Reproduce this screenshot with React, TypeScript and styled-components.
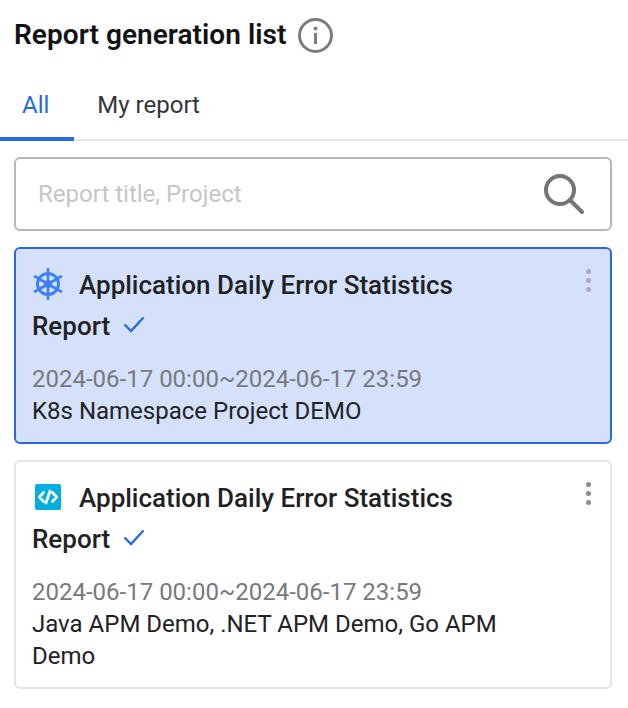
import React from 'react'
import styled, { createGlobalStyle } from 'styled-components'

const Global = createGlobalStyle`
  html, body { margin: 0; padding: 0; background: #fff; }
  body { font-family: Roboto, "Liberation Sans", sans-serif; }
`

const Page = styled.div`
  width: 628px;
  height: 708px;
  box-sizing: border-box;
  overflow: hidden;
  background: #fff;
`

const Header = styled.div`
  display: flex;
  align-items: center;
  gap: 11px;
  height: 70px;
  padding: 0 14px 2px;
  box-sizing: border-box;
`

const Title = styled.h1`
  margin: 0;
  font-size: 28px;
  font-weight: 600;
  letter-spacing: 0.05px;
  color: #111214;
`

const Info = styled.svg`
  width: 35px;
  height: 35px;
  margin-top: 2px;
`

const Tabs = styled.div`
  display: flex;
  height: 71px;
  box-sizing: border-box;
  border-bottom: 2px solid #e4e6e9;
`

const Tab = styled.div<{ $active?: boolean }>`
  display: flex;
  align-items: center;
  box-sizing: border-box;
  height: 71px;
  margin-bottom: -2px;
  padding: 3px 24px 0 ${({ $active }) => ($active ? '22px' : '23px')};
  padding-right: ${({ $active }) => ($active ? '25px' : '24px')};
  font-size: 24px;
  color: ${({ $active }) => ($active ? '#2a6ae0' : '#33363a')};
  border-bottom: 4px solid ${({ $active }) => ($active ? '#2a6ae0' : 'transparent')};
`

const Search = styled.div`
  display: flex;
  align-items: center;
  justify-content: space-between;
  margin: 16px 16px 0 14px;
  height: 74px;
  box-sizing: border-box;
  border: 2px solid #b5b7ba;
  border-radius: 6px;
  padding: 0 25px 0 22px;
  font-size: 24px;
  color: #c4c6c9;
`

const List = styled.div`
  display: flex;
  flex-direction: column;
  gap: 16px;
  margin: 16px 16px 0 14px;
`

const Card = styled.div<{ $selected?: boolean }>`
  display: flex;
  justify-content: space-between;
  box-sizing: border-box;
  padding: 16px 19px 15px 16px;
  border-radius: 6px;
  border: 2px solid ${({ $selected }) => ($selected ? '#2a6ae0' : '#e4e6e9')};
  background: ${({ $selected }) => ($selected ? '#d5e1fb' : '#fff')};
`

const CardBody = styled.div`
  width: 500px;
`

const CardTitle = styled.div`
  font-size: 26px;
  font-weight: 500;
  line-height: 41px;
  color: #1f2225;
`

const TypeIcon = styled.svg`
  display: inline-block;
  width: 32px;
  height: 32px;
  margin-right: 15px;
  vertical-align: -6px;
`

const Check = styled.svg`
  display: inline-block;
  width: 22px;
  height: 17px;
  margin-left: 13px;
  vertical-align: 2px;
`

const Period = styled.div`
  font-size: 24px;
  color: #77797d;
  margin-top: 16px;
  line-height: 32px;
`

const Meta = styled.div`
  font-size: 24px;
  color: #1f2225;
  line-height: 32px;
`

const Kebab = styled.div<{ $muted?: boolean }>`
  display: flex;
  flex-direction: column;
  gap: 4px;
  margin-top: 4px;
  height: 24px;

  span {
    width: 5px;
    height: 5px;
    border-radius: 50%;
    background: ${({ $muted }) => ($muted ? '#a9adb4' : '#8a8c90')};
  }
`

const InfoIcon = () => (
  <Info viewBox="0 0 35 35" fill="none">
    <circle cx="17.5" cy="17.5" r="16" stroke="#7d7d7d" strokeWidth="3" />
    <circle cx="17.5" cy="10.5" r="2" fill="#7d7d7d" />
    <rect x="16" y="15" width="3" height="11" fill="#7d7d7d" />
  </Info>
)

const SearchIcon = () => (
  <svg width="42" height="42" viewBox="0 0 42 42" fill="none">
    <circle cx="17" cy="17" r="14" stroke="#757575" strokeWidth="4" />
    <path d="M27 27l12 12" stroke="#757575" strokeWidth="4" strokeLinecap="round" />
  </svg>
)

const WheelIcon = () => (
  <TypeIcon viewBox="0 0 32 32" fill="none">
    <circle cx="16" cy="16" r="10.5" stroke="#3f80f5" strokeWidth="3" />
    <path
      d="M16 1v30M3 8.5l26 15M29 8.5l-26 15"
      stroke="#3f80f5"
      strokeWidth="2.6"
      strokeLinecap="round"
    />
    <circle cx="16" cy="16" r="4" fill="#3f80f5" />
  </TypeIcon>
)

const CodeIcon = () => (
  <TypeIcon viewBox="0 0 32 32" fill="none">
    <rect x="3" y="3" width="26" height="26" rx="2" fill="#00afdf" />
    <path
      d="M11.5 11.5L7.5 16l4 4.5M20.5 11.5l4 4.5-4 4.5M18 10l-4 12"
      stroke="#fff"
      strokeWidth="2.8"
      strokeLinecap="round"
      strokeLinejoin="round"
    />
  </TypeIcon>
)

const CheckIcon = () => (
  <Check viewBox="0 0 22 17" fill="none">
    <path d="M1.5 8.5l6.5 6.5L20.5 1.5" stroke="#2a6ae0" strokeWidth="2.4" />
  </Check>
)

const App: React.FC = () => (
  <Page>
    <Global />
    <Header>
      <Title>Report generation list</Title>
      <InfoIcon />
    </Header>
    <Tabs>
      <Tab $active>All</Tab>
      <Tab>My report</Tab>
    </Tabs>
    <Search>
      Report title, Project
      <SearchIcon />
    </Search>
    <List>
      <Card $selected>
        <CardBody>
          <CardTitle>
            <WheelIcon />
            Application Daily Error Statistics Report
            <CheckIcon />
          </CardTitle>
          <Period>2024-06-17 00:00~2024-06-17 23:59</Period>
          <Meta>K8s Namespace Project DEMO</Meta>
        </CardBody>
        <Kebab $muted>
          <span />
          <span />
          <span />
        </Kebab>
      </Card>
      <Card>
        <CardBody>
          <CardTitle>
            <CodeIcon />
            Application Daily Error Statistics Report
            <CheckIcon />
          </CardTitle>
          <Period>2024-06-17 00:00~2024-06-17 23:59</Period>
          <Meta>Java APM Demo, .NET APM Demo, Go APM Demo</Meta>
        </CardBody>
        <Kebab>
          <span />
          <span />
          <span />
        </Kebab>
      </Card>
    </List>
  </Page>
)

export default App
